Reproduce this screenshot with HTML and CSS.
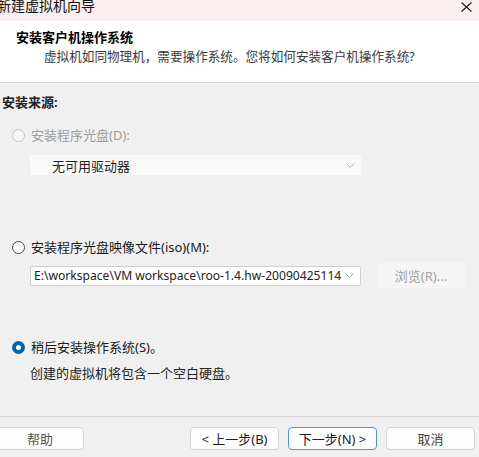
FILE: index.html
```html
<!DOCTYPE html>
<html lang="zh-CN">
<head>
<meta charset="utf-8">
<title>新建虚拟机向导</title>
<link rel="stylesheet" href="styles.css">
</head>
<body>
<div class="window">
  <div class="titlebar">
    <span class="title">新建虚拟机向导</span>
    <svg class="close" width="11" height="10" viewBox="0 0 11 10"><path d="M0.5 0.5 L10.5 9.5 M10.5 0.5 L0.5 9.5" stroke="#1a1a1a" stroke-width="1.1" fill="none"/></svg>
  </div>
  <div class="header">
    <div class="h-title">安装客户机操作系统</div>
    <div class="h-sub">虚拟机如同物理机，需要操作系统。您将如何安装客户机操作系统?</div>
  </div>
  <div class="content">
    <div class="section-label">安装来源:</div>

    <div class="radio-row disabled r1">
      <span class="radio"></span>
      <span class="label">安装程序光盘(D):</span>
    </div>
    <div class="select disabled-select s1">
      <span class="sel-text">无可用驱动器</span>
      <svg class="chev" width="9" height="5" viewBox="0 0 9 5"><path d="M0.5 0.5 L4.5 4.5 L8.5 0.5" stroke="#b8b8b8" fill="none"/></svg>
    </div>

    <div class="radio-row r2">
      <span class="radio"></span>
      <span class="label">安装程序光盘映像文件(iso)(M):</span>
    </div>
    <div class="iso-row">
      <div class="select combo">
        <span class="sel-text path">E:\workspace\VM workspace\roo-1.4.hw-200904251145</span>
        <svg class="chev" width="9" height="5" viewBox="0 0 9 5"><path d="M0.5 0.5 L4.5 4.5 L8.5 0.5" stroke="#a0a0a0" fill="none"/></svg>
      </div>
      <div class="browse">浏览(R)...</div>
    </div>

    <div class="radio-row r3">
      <span class="radio checked"></span>
      <span class="label">稍后安装操作系统(S)。</span>
    </div>
    <div class="desc">创建的虚拟机将包含一个空白硬盘。</div>
  </div>
  <div class="footer">
    <div class="btn help">帮助</div>
    <div class="spacer"></div>
    <div class="btn back">&lt; 上一步(B)</div>
    <div class="btn next">下一步(N) &gt;</div>
    <div class="btn cancel">取消</div>
  </div>
</div>
</body>
</html>
```

FILE: styles.css
```css
html, body {
  margin: 0;
  padding: 0;
}
body {
  width: 479px;
  height: 457px;
  overflow: hidden;
  background: #f0f0f0;
  font-family: "Noto Sans", "Noto Sans CJK SC", sans-serif;
  font-size: 13px;
  color: #1a1a1a;
}
.window {
  display: flex;
  flex-direction: column;
  height: 457px;
}
.titlebar {
  height: 21px;
  background: #f8efee;
  display: flex;
  justify-content: space-between;
  align-items: flex-start;
}
.title {
  font-size: 14px;
  line-height: 14px;
  margin-left: -3px;
  margin-top: -1px;
  color: #111;
}
.close {
  margin-top: 2px;
  margin-right: 7px;
}
.header {
  height: 62px;
  background: #ffffff;
  border-bottom: 1px solid #d9d9d9;
  box-sizing: border-box;
  padding-top: 8px;
}
.h-title {
  margin-left: 16px;
  font-weight: bold;
  font-size: 13px;
  line-height: 16px;
  color: #000;
}
.h-sub {
  margin-left: 44px;
  margin-top: 4px;
  font-size: 12.6px;
  line-height: 16px;
  color: #3a3a3a;
}
.content {
  height: 334px;
  box-sizing: border-box;
  padding-top: 11px;
  display: flex;
  flex-direction: column;
  border-bottom: 1px solid #d4d4d4;
}
.section-label {
  margin-left: 2px;
  line-height: 16px;
  font-weight: bold;
  color: #222;
}
.radio-row {
  display: flex;
  align-items: center;
  height: 16px;
  margin-left: 12px;
}
.radio {
  width: 13px;
  height: 13px;
  border-radius: 50%;
  border: 1px solid #444;
  box-sizing: border-box;
  background: #fbfbfb;
  margin-right: 6px;
}
.label {
  line-height: 16px;
  color: #1a1a1a;
}
.disabled .radio {
  border-color: #c6c6c6;
  background: #f6f6f6;
}
.disabled .label {
  color: #9c9c9c;
}
.radio.checked {
  border: 4px solid #0063b8;
  background: #ffffff;
}
.r1 { margin-top: 17px; }
.r2 { margin-top: 64px; }
.r3 { margin-top: 51px; }
.select {
  display: flex;
  align-items: center;
  justify-content: space-between;
  box-sizing: border-box;
  height: 20px;
  width: 331px;
  margin-left: 30px;
}
.disabled-select {
  background: #f9f9f9;
  margin-top: 12px;
}
.disabled-select .sel-text {
  margin-left: 22px;
  color: #222;
}
.chev {
  flex: none;
  margin-right: 6px;
}
.iso-row {
  display: flex;
  align-items: center;
  margin-top: 8px;
  height: 25px;
}
.combo {
  background: #ffffff;
  border: 1px solid #cfcfcf;
  border-radius: 2px;
  margin-left: 30px;
  overflow: hidden;
}
.path {
  font-family: "Noto Sans", sans-serif;
  font-size: 12.1px;
  color: #222;
  white-space: nowrap;
  overflow: hidden;
  width: 308px;
  margin-left: 3px;
  flex: none;
}
.browse {
  margin-left: 16px;
  width: 88px;
  height: 25px;
  box-sizing: border-box;
  background: #f5f5f5;
  border-radius: 3px;
  display: flex;
  align-items: center;
  justify-content: center;
  color: #a2a2a2;
}
.desc {
  margin-left: 30px;
  margin-top: 10px;
  line-height: 16px;
  color: #222;
}
.footer {
  display: flex;
  align-items: flex-start;
  padding-top: 10px;
  padding-right: 4px;
}
.spacer {
  flex: 1;
}
.btn {
  width: 89px;
  height: 23px;
  box-sizing: border-box;
  border: 1px solid #d3d3d3;
  border-radius: 4px;
  background: #fdfdfd;
  display: flex;
  align-items: center;
  justify-content: center;
  color: #222;
  line-height: 16px;
}
.help {
  margin-left: -4px;
  width: 88px;
  color: #555;
}
.next {
  margin-left: 9px;
  border-color: #4f94d6;
}
.cancel {
  margin-left: 9px;
  color: #444;
}
```
